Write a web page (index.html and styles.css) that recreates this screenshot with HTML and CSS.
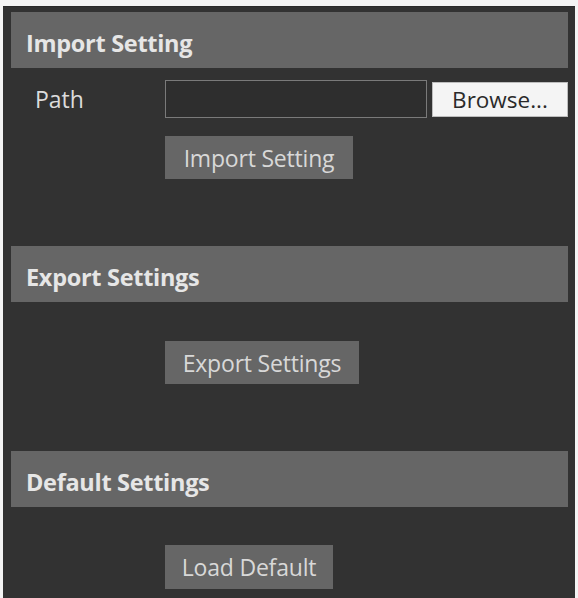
FILE: index.html
```html
<!DOCTYPE html>
<html>
<head>
<meta charset="utf-8">
<link rel="stylesheet" href="styles.css">
</head>
<body>
<div class="frame">
  <section class="section">
    <div class="section-title">Import Setting</div>
    <div class="section-body body-import">
      <div class="row">
        <span class="label">Path</span>
        <div class="path-input"></div>
        <div class="browse">Browse...</div>
      </div>
      <div class="row">
        <span class="label"></span>
        <div class="btn btn-import">Import Setting</div>
      </div>
    </div>
  </section>
  <section class="section">
    <div class="section-title">Export Settings</div>
    <div class="section-body body-export">
      <div class="row">
        <span class="label"></span>
        <div class="btn btn-export">Export Settings</div>
      </div>
    </div>
  </section>
  <section class="section">
    <div class="section-title">Default Settings</div>
    <div class="section-body body-default">
      <div class="row">
        <span class="label"></span>
        <div class="btn btn-load">Load Default</div>
      </div>
    </div>
  </section>
</div>
</body>
</html>
```

FILE: styles.css
```css
html, body {
  margin: 0;
  padding: 0;
  background: #f4f4f4;
  height: 100%;
  overflow: hidden;
}

.frame {
  margin: 6px 3px 0 3px;
  height: 592px;
  box-sizing: border-box;
  background: #323232;
  border-top: 1px solid #2a2a2a;
  padding: 5px 7px 0 8px;
  font-family: "Open Sans", "Liberation Sans", sans-serif;
  color: #dcdcdc;
}

.section-title {
  height: 56px;
  box-sizing: border-box;
  background: #666666;
  display: flex;
  align-items: center;
  padding-left: 15px;
  padding-top: 5px;
  font-weight: bold;
  font-size: 23.5px;
  color: #e6e6e6;
  letter-spacing: -0.3px;
}

.section-body {
  display: flex;
  flex-direction: column;
}

.body-import {
  padding-top: 12px;
  padding-bottom: 67px;
  gap: 18px;
}

.body-export {
  padding-top: 39px;
  padding-bottom: 67px;
}

.body-default {
  padding-top: 38px;
}

.row {
  display: flex;
  align-items: center;
}

.label {
  width: 154px;
  padding-left: 24px;
  box-sizing: border-box;
  font-size: 23px;
  color: #dcdcdc;
  flex: none;
}

.path-input {
  width: 262px;
  height: 38px;
  box-sizing: border-box;
  border: 1px solid #7a7a7a;
  background: #2e2e2e;
}

.browse {
  margin-left: 5px;
  width: 136px;
  height: 35px;
  box-sizing: border-box;
  background: #f4f4f4;
  border: 1px solid #bdbdbd;
  color: #2a2a2a;
  font-size: 22.5px;
  display: flex;
  align-items: center;
  justify-content: center;
}

.btn {
  height: 43px;
  background: #666666;
  color: #d8d8d8;
  font-size: 23px;
  letter-spacing: -0.2px;
  display: flex;
  align-items: center;
  justify-content: center;
  box-sizing: border-box;
}

.btn-import { width: 188px; }
.btn-export { width: 194px; }
.btn-load { width: 168px; height: 44px; }
```
